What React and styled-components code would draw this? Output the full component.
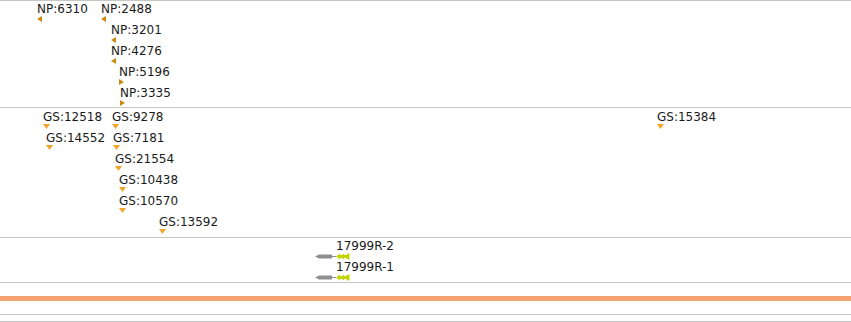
import React from 'react';
import styled, { createGlobalStyle } from "styled-components";

const GlobalStyle = createGlobalStyle`
  html, body {
    margin: 0;
    padding: 0;
    background: #ffffff;
  }
  body {
    font-family: "DejaVu Sans", Verdana, sans-serif;
  }
`;

const colors = {
    line: "#c6c6c6",
    text: "#1a1a1a",
    np: "#c98a0c",
    gs: "#f2a52a",
    bar: "#f5a26e",
    geneBody: "#8f8f8f",
    geneArrow: "#c4d600",
};

const View = styled.div`
  width: 851px;
  height: 322px;
  display: flex;
  flex-direction: column;
  overflow: hidden;
`;
const Track = styled.div`
  position: relative;
  height: ${p => p.$height}px;
  border-top: 1px solid ${colors.line};
  flex-shrink: 0;
`;
const Ruler = styled.div`
  height: ${p => p.$height}px;
  border-top: 1px solid ${colors.line};
  flex-shrink: 0;
`;
const OverviewBar = styled.div`
  height: 5px;
  background: ${colors.bar};
  flex-shrink: 0;
`;
const Gap = styled.div`
  height: ${p => p.$height}px;
  flex-shrink: 0;
`;
const Feature = styled.div`
  position: absolute;
  left: ${p => p.$x}px;
  top: ${p => p.$y}px;
  display: flex;
  flex-direction: column;
  align-items: flex-start;
`;
const Label = styled.span`
  font-size: 12px;
  line-height: 14px;
  color: ${colors.text};
  white-space: nowrap;
`;
const GeneRow = styled.div`
  position: absolute;
  left: ${p => p.$x}px;
  top: ${p => p.$y}px;
  display: flex;
  flex-direction: column;
  align-items: flex-start;
`;
const GeneLabel = styled(Label)`
  margin-left: 21px;
`;
const Glyph = styled.svg`
  display: block;
  margin-top: ${p => p.$offset || 0}px;
`;

const npFeatures = [
    { label: "NP:6310", x: 37, row: 0, dir: "left" },
    { label: "NP:2488", x: 101, row: 0, dir: "left" },
    { label: "NP:3201", x: 111, row: 1, dir: "left" },
    { label: "NP:4276", x: 111, row: 2, dir: "left" },
    { label: "NP:5196", x: 119, row: 3, dir: "right" },
    { label: "NP:3335", x: 120, row: 4, dir: "right" },
];

const gsFeatures = [
    { label: "GS:12518", x: 43, row: 0 },
    { label: "GS:9278", x: 112, row: 0 },
    { label: "GS:15384", x: 657, row: 0 },
    { label: "GS:14552", x: 46, row: 1 },
    { label: "GS:7181", x: 113, row: 1 },
    { label: "GS:21554", x: 115, row: 2 },
    { label: "GS:10438", x: 119, row: 3 },
    { label: "GS:10570", x: 119, row: 4 },
    { label: "GS:13592", x: 159, row: 5 },
];

const genes = [
    { label: "17999R-2", row: 0 },
    { label: "17999R-1", row: 1 },
];

const StrandMark = ({ dir }) => (
    <Glyph width="5" height="6" viewBox="0 0 5 6">
        {dir === "left"
            ? <polygon points="0,3 5,0 5,6" fill={colors.np} />
            : <polygon points="0,0 5,3 0,6" fill={colors.np} />}
    </Glyph>
);

const DownMark = () => (
    <Glyph width="7" height="5" viewBox="0 0 7 5">
        <polygon points="0,0 7,0 3.5,5" fill={colors.gs} />
    </Glyph>
);

const GeneGlyph = () => (
    <Glyph width="35" height="7" viewBox="0 0 35 7">
        <path d="M0,3.5 L4,1.5 L17,1.5 L17,5.5 L4,5.5 Z" fill={colors.geneBody} />
        <rect x="17" y="3" width="4" height="1" fill={colors.geneBody} />
        <path d="M21,3.5 L25,0.5 L25,6.5 Z M25,3.5 L29,0.5 L29,6.5 Z M29,3.5 L33,0.5 L33,6.5 Z" fill={colors.geneArrow} />
        <rect x="24" y="2" width="10" height="3" fill={colors.geneArrow} />
        <rect x="33" y="0.5" width="1.5" height="6" fill={colors.geneArrow} />
    </Glyph>
);

const App = () => {
    return (
        <View>
            <GlobalStyle />
            <Track $height={106}>
                {npFeatures.map(f => (
                    <Feature key={f.label} $x={f.x} $y={1 + f.row * 21}>
                        <Label>{f.label}</Label>
                        <StrandMark dir={f.dir} />
                    </Feature>
                ))}
            </Track>
            <Track $height={129}>
                {gsFeatures.map(f => (
                    <Feature key={f.label} $x={f.x} $y={2 + f.row * 21}>
                        <Label>{f.label}</Label>
                        <DownMark />
                    </Feature>
                ))}
            </Track>
            <Track $height={44}>
                {genes.map(g => (
                    <GeneRow key={g.label} $x={315} $y={1 + g.row * 21}>
                        <GeneLabel>{g.label}</GeneLabel>
                        <GeneGlyph />
                    </GeneRow>
                ))}
            </Track>
            <Ruler $height={13} />
            <OverviewBar />
            <Gap $height={13} />
            <Ruler $height={6} />
            <Ruler $height={1} />
        </View>
    )
}

export default App;
